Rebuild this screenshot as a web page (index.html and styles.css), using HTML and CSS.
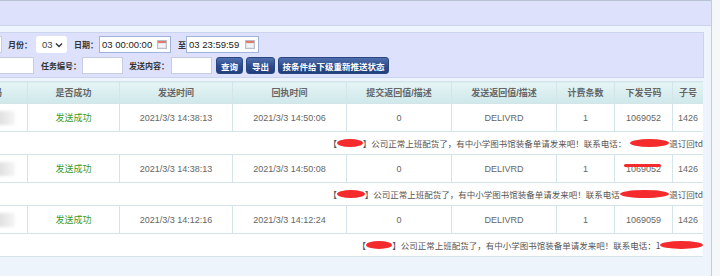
FILE: index.html
```html
<!DOCTYPE html>
<html>
<head>
  <title>短信发送记录</title>
  <meta charset="UTF-8">
  <link rel="stylesheet" href="styles.css">
</head>
<body>
  <div class="page">
    <div class="topbar"></div>

    <div class="content">
      <!-- 查询条件 -->
      <div class="filter">
        <div class="frow">
          <input type="text" class="inp lead1">
          <span class="lbl l-month">月份：</span>
          <div class="sel">03
            <svg width="8" height="6" viewBox="0 0 8 6"><path d="M1 1.5 L4 4.5 L7 1.5" fill="none" stroke="#333" stroke-width="1.4"/></svg>
          </div>
          <span class="lbl l-date">日期：</span>
          <div class="date d1">
            <span>03 00:00:00</span>
            <svg class="cal" width="10" height="9" viewBox="0 0 10 9"><rect x="0.5" y="0.5" width="9" height="8" fill="#e4e6ea" stroke="#b9bfc8"/><rect x="1" y="1" width="8" height="2" fill="#e07a6a"/><rect x="2" y="4" width="6" height="3" fill="#f4f4f6"/></svg>
          </div>
          <span class="lbl l-to">至</span>
          <div class="date d2">
            <span>03 23:59:59</span>
            <svg class="cal" width="10" height="9" viewBox="0 0 10 9"><rect x="0.5" y="0.5" width="9" height="8" fill="#e4e6ea" stroke="#b9bfc8"/><rect x="1" y="1" width="8" height="2" fill="#e07a6a"/><rect x="2" y="4" width="6" height="3" fill="#f4f4f6"/></svg>
          </div>
        </div>
        <div class="frow second">
          <input type="text" class="inp lead2">
          <span class="lbl l-task">任务编号：</span>
          <input type="text" class="inp short">
          <span class="lbl l-content">发送内容：</span>
          <input type="text" class="inp short">
          <button class="btn b-query">查询</button>
          <button class="btn b-export">导出</button>
          <button class="btn b-push">按条件给下级重新推送状态</button>
        </div>
      </div>

      <!-- 发送记录 -->
      <div class="grid-wrap">
        <table class="grid">
          <colgroup>
            <col style="width:87px"><col style="width:92px"><col style="width:113px"><col style="width:114px">
            <col style="width:105px"><col style="width:105px"><col style="width:58px"><col style="width:58px"><col style="width:31px">
          </colgroup>
          <tr class="head">
            <th>手机号码</th><th>是否成功</th><th>发送时间</th><th>回执时间</th>
            <th>提交返回值/描述</th><th>发送返回值/描述</th><th>计费条数</th><th>下发号码</th><th>子号</th>
          </tr>

          <tr class="data">
            <td><div class="mosaic"></div></td>
            <td class="ok">发送成功</td><td>2021/3/3 14:38:13</td><td>2021/3/3 14:50:06</td>
            <td>0</td><td>DELIVRD</td><td>1</td><td>1069052</td><td>1426</td>
          </tr>
          <tr class="msg">
            <td colspan="9"><div class="msg-text m1">【<span class="redact r-sign"></span>】公司正常上班配货了，有中小学图书馆装备单请发来吧！联系电话：<span class="redact r-phone1"></span>退订回td</div></td>
          </tr>

          <tr class="data">
            <td><div class="mosaic"></div></td>
            <td class="ok">发送成功</td><td>2021/3/3 14:38:13</td><td>2021/3/3 14:50:08</td>
            <td>0</td><td>DELIVRD</td><td>1</td><td><span class="struck">1069052</span></td><td>1426</td>
          </tr>
          <tr class="msg">
            <td colspan="9"><div class="msg-text m2">【<span class="redact r-sign"></span>】公司正常上班配货了，有中小学图书馆装备单请发来吧！联系电话<span class="redact r-phone2"></span>退订回td</div></td>
          </tr>

          <tr class="data">
            <td><div class="mosaic"></div></td>
            <td class="ok">发送成功</td><td>2021/3/3 14:12:16</td><td>2021/3/3 14:12:24</td>
            <td>0</td><td>DELIVRD</td><td>1</td><td>1069059</td><td>1426</td>
          </tr>
          <tr class="msg">
            <td colspan="9"><div class="msg-text m3">【<span class="redact r-sign3"></span>】公司正常上班配货了，有中小学图书馆装备单请发来吧！联系电话：1<span class="redact r-phone3"></span></div></td>
          </tr>
        </table>
      </div>
    </div>
  </div>
</body>
</html>
```

FILE: styles.css
```css
body {
  margin: 0;
  background: #f6f7f9;
  font-family: 'Liberation Sans', 'Noto Sans CJK SC', sans-serif;
  overflow: hidden;
}

.page {
  width: 772px;
  height: 276px;
  margin-left: -60px;
  box-sizing: border-box;
  border-right: 1px solid #c3cedb;
  background: #eef4fb;
}

.topbar {
  height: 24px;
  background: #dde1fc;
  border-top: 1px solid #b5c3d2;
  border-bottom: 1px solid #c9d4e6;
}

.content {
  padding: 6px 7px 0 0;
}

/* filter panel */
.filter {
  background: #dde1fc;
  border: 1px solid #cbd4ee;
  padding: 3px 4px;
}

.frow {
  display: flex;
  align-items: center;
  height: 17px;
}

.frow.second {
  margin-top: 4px;
}

.lbl {
  font-family: 'Noto Sans CJK SC', sans-serif;
  font-size: 8px;
  font-weight: bold;
  color: #333;
  white-space: nowrap;
}

.inp {
  height: 17px;
  box-sizing: border-box;
  border: 1px solid #c6cde0;
  background: #fff;
  padding: 0 2px;
  margin: 0;
}

.lead1 { width: 57px; }
.lead2 { width: 89px; }
.short { width: 41px; }

.l-month { margin-left: 6px; }
.l-date { margin-left: 7px; }
.l-to { margin-left: 7px; }
.l-task { margin-left: 7px; }
.l-content { margin-left: 6px; }
.l-task + .inp { margin-left: 1px; }
.l-content + .inp { margin-left: 2px; }

.sel {
  width: 31px;
  height: 17px;
  margin-left: 4px;
  box-sizing: border-box;
  background: #fff;
  border-radius: 3px;
  display: flex;
  align-items: center;
  justify-content: space-between;
  padding: 0 4px 0 6px;
  font-size: 9.5px;
  color: #444;
}

.date {
  height: 17px;
  box-sizing: border-box;
  border: 1px solid #9fb3dc;
  background: #fff;
  display: flex;
  align-items: center;
  justify-content: space-between;
  padding: 0 3px 0 2px;
  font-size: 9.5px;
  color: #222;
}

.d1 { width: 72px; margin-left: 1px; }
.d2 { width: 73px; margin-left: 0; }

.btn {
  height: 17px;
  margin: 0 0 0 3px;
  padding: 0;
  border: 1px solid #2a4680;
  border-radius: 3px;
  background: linear-gradient(#4f6fae, #2c4b8c 55%, #223f7c);
  color: #fff;
  font-family: 'Noto Sans CJK SC', sans-serif;
  font-size: 8.5px;
  font-weight: bold;
}

.b-query { width: 27px; margin-left: 4px; }
.b-export { width: 29px; }
.b-push { width: 111px; }

/* record table */
.grid-wrap {
  margin-top: 3px;
  width: 763px;
  overflow: hidden;
}

.grid {
  width: 763px;
  table-layout: fixed;
  border-collapse: collapse;
  background: #fff;
  font-size: 9px;
  color: #666;
}

.grid th,
.grid td {
  border: 1px solid #d3e5e8;
  padding: 0;
  text-align: center;
  white-space: nowrap;
}

.grid th {
  height: 21px;
  background: linear-gradient(#e6f4f5, #cfe8ea);
  font-weight: bold;
  color: #666;
}

.data td {
  height: 27px;
}

.ok {
  color: #3b9a2c;
}

.mosaic {
  width: 40px;
  height: 14px;
  margin-left: 34px;
  background: linear-gradient(to right, #d6d6d6, #e2e2e2 65%, #f6f6f6);
  filter: blur(1.5px);
}

.msg td {
  height: 22px;
  border-left: none;
  text-align: left;
}

.msg-text {
  display: flex;
  align-items: center;
  font-family: 'Noto Sans CJK SC', sans-serif;
  font-size: 8.5px;
  color: #555;
  white-space: nowrap;
}

.m1, .m2 { margin-left: 388px; }
.m3 { margin-left: 417px; }

.redact {
  display: inline-block;
  height: 8px;
  background: #f42a2d;
  border-radius: 50%;
}

.r-sign { width: 35px; }
.r-sign3 { width: 34px; }
.r-phone1 { width: 53px; margin-left: 4px; }
.r-phone2 { width: 62px; }
.r-phone3 { width: 56px; margin-left: -1px; }

.struck {
  position: relative;
}

.struck::after {
  content: "";
  position: absolute;
  left: -2px;
  right: 0;
  top: 0;
  height: 3px;
  background: #f42a2d;
  border-radius: 2px;
}
```
